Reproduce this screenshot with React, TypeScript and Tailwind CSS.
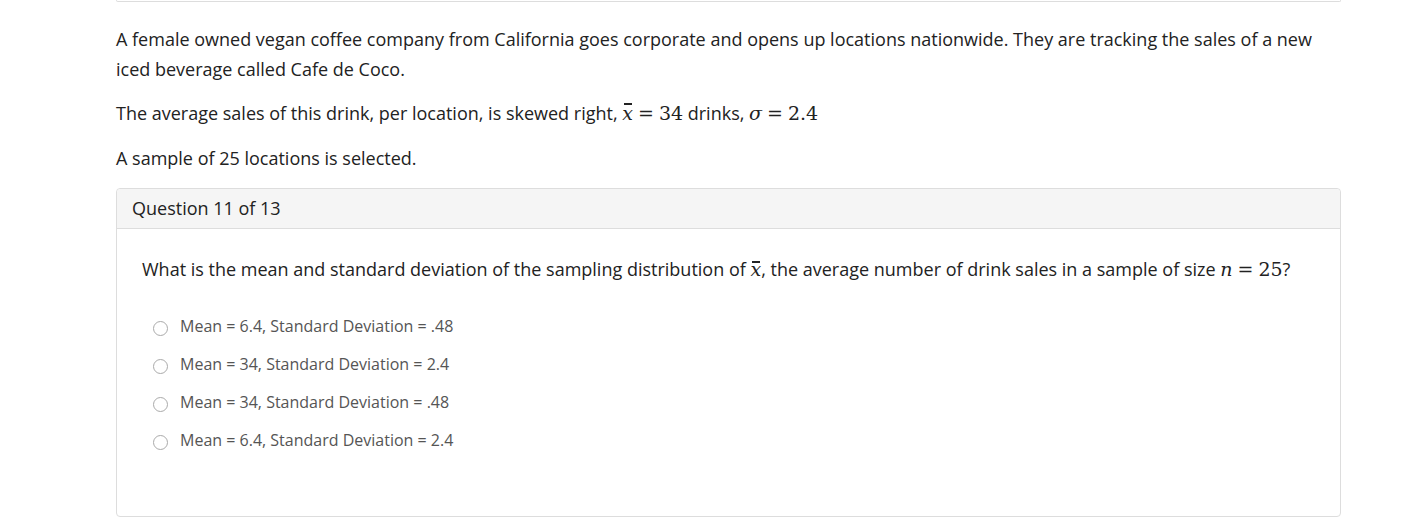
import React from "react";

const MF = '"DejaVu Serif", "Liberation Serif", serif';

const M: React.FC<{ children: React.ReactNode; i?: boolean; op?: boolean }> = ({ children, i, op }) => (
  <span
    className={`text-[19px] ${i ? "italic" : ""} ${op ? "mx-[5px]" : ""}`}
    style={{ fontFamily: MF }}
  >
    {children}
  </span>
);

const XBar = () => (
  <span className="relative inline-block italic text-[19px]" style={{ fontFamily: MF }}>
    <span className="absolute left-[2px] right-[1px] top-[5px] h-[1.5px] bg-[#222]" />
    x
  </span>
);

const options = [
  "Mean = 6.4, Standard Deviation = .48",
  "Mean = 34, Standard Deviation = 2.4",
  "Mean = 34, Standard Deviation = .48",
  "Mean = 6.4, Standard Deviation = 2.4",
];

export default function App() {
  return (
    <div
      className="w-[1412px] h-[519px] bg-white text-[#222] overflow-hidden"
      style={{ fontFamily: '"Open Sans", "Noto Sans", sans-serif' }}
    >
      <div className="ml-[116px] w-[1225px]">
        <div className="h-[2px] border-b border-x border-[#ddd] rounded-b-[3px]" />
        <div className="pt-[22px] text-[18px]">
          <p className="leading-[30px] max-w-[1215px]">
            A female owned vegan coffee company from California goes corporate and opens up locations nationwide. They are tracking the sales of a new iced beverage called Cafe de Coco.
          </p>
          <p className="leading-[30px] mt-[14px]">
            The average sales of this drink, per location, is skewed right, <XBar /><M op>=</M><M>34</M> drinks, <M i>σ</M><M op>=</M><M>2.4</M>
          </p>
          <p className="leading-[30px] mt-[15px]">A sample of 25 locations is selected.</p>
        </div>
        <div className="mt-[15px] border border-[#ddd] rounded-[4px] h-[329px]">
          <div className="bg-[#f5f5f5] border-b border-[#ddd] h-[40px] flex items-center px-[15px] text-[18px] rounded-t-[4px]">
            Question 11 of 13
          </div>
          <div className="px-[25px] pt-[27px] text-[18px]">
            <p className="leading-[26px]">
              What is the mean and standard deviation of the sampling distribution of <XBar />, the average number of drink sales in a sample of size <M i>n</M><M op>=</M><M>25</M>?
            </p>
            <div className="mt-[33px] flex flex-col gap-[16px] pl-[11px]">
              {options.map((o) => (
                <label key={o} className="flex items-center h-[22px] text-[16px] text-[#555]">
                  <span className="mt-[4px] w-[15px] h-[15px] rounded-full border border-[#aaa] bg-white mr-[12px] shrink-0" />
                  {o}
                </label>
              ))}
            </div>
          </div>
        </div>
      </div>
    </div>
  );
}
